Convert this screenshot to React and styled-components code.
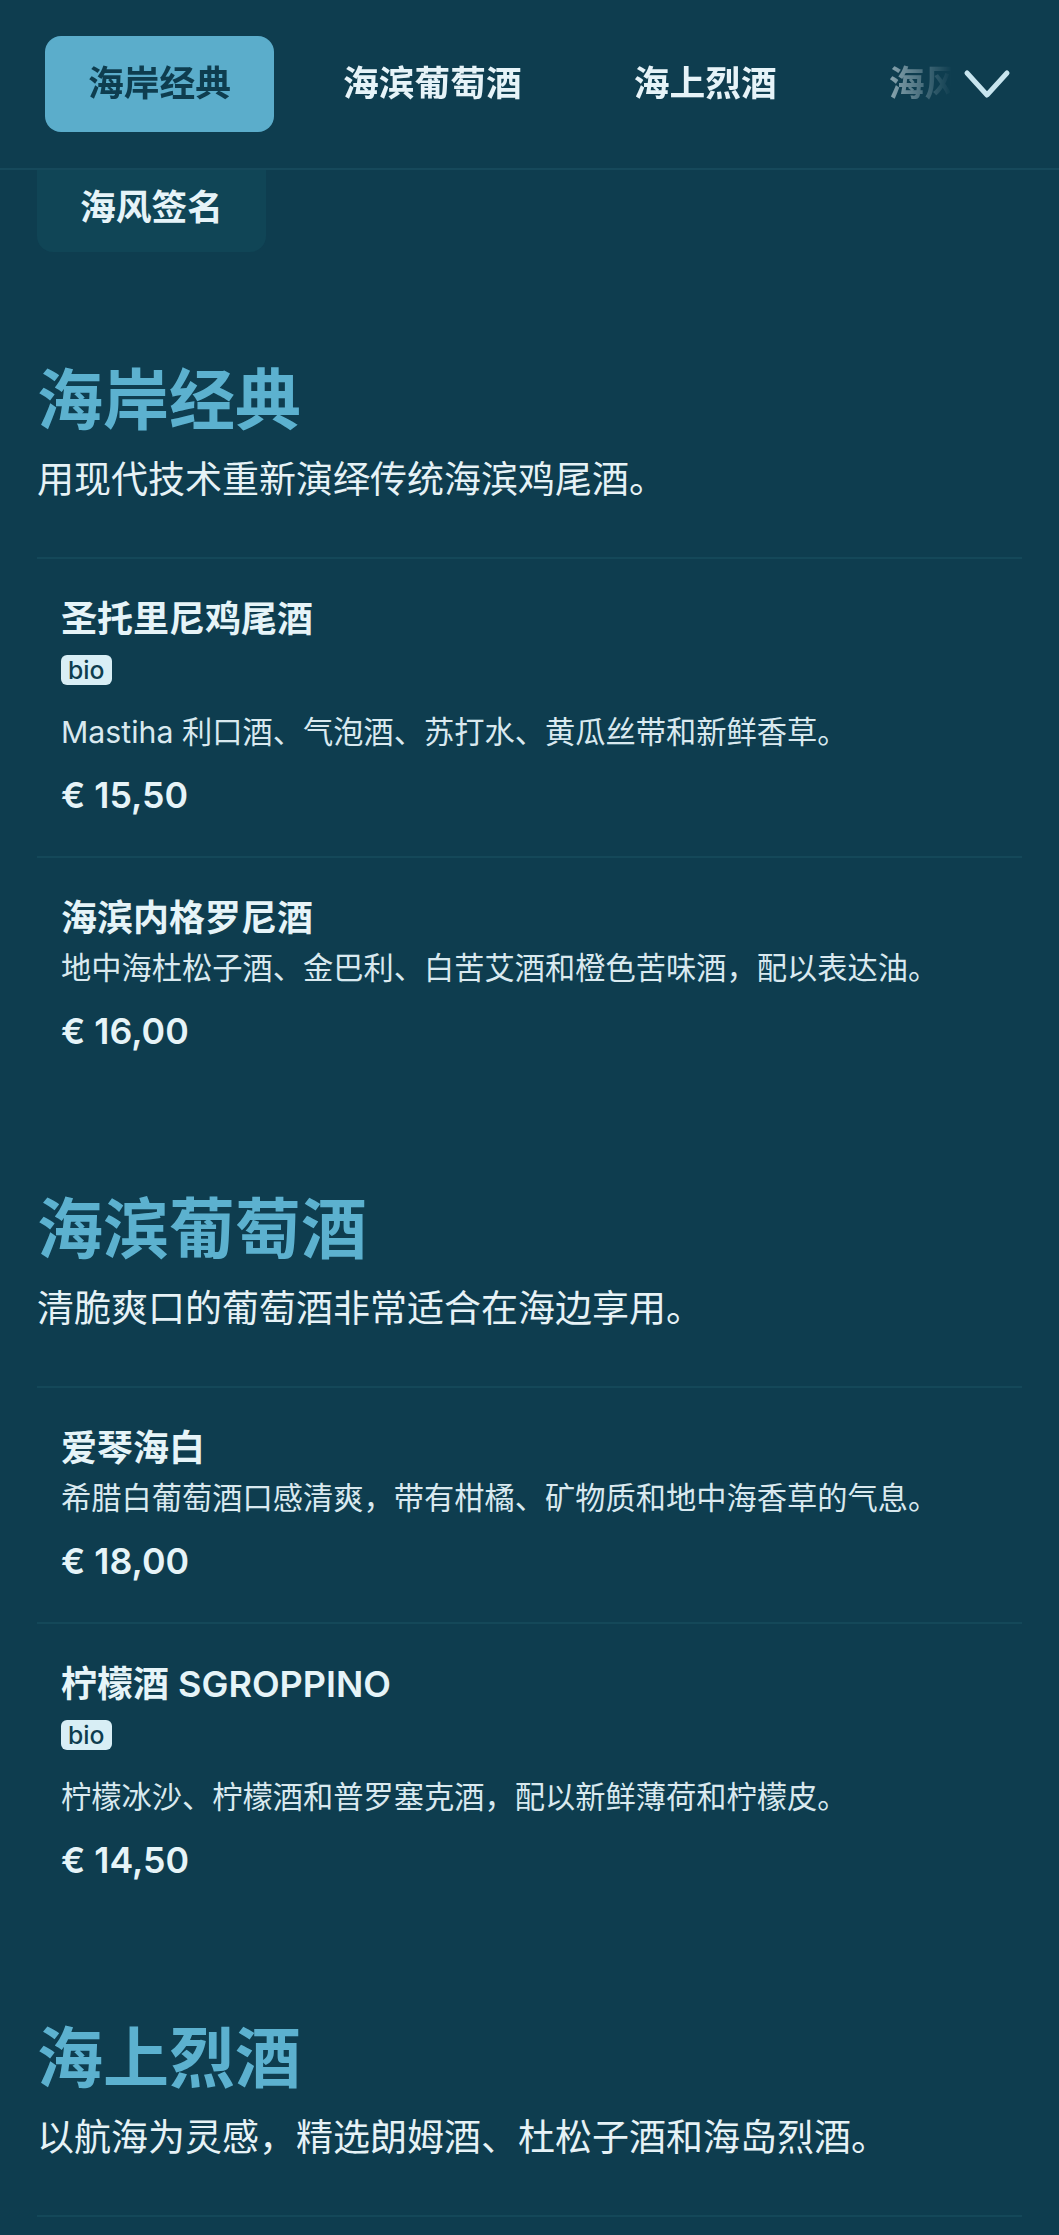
import React from "react";
import styled, { createGlobalStyle } from "styled-components";

const Global = createGlobalStyle`
  html, body {
    margin: 0;
    padding: 0;
    background: #0e3d4f;
  }
  body {
    font-family: Inter, "Noto Sans CJK SC", "Noto Sans", sans-serif;
    color: #e4f2f7;
    -webkit-font-smoothing: antialiased;
  }
  * { box-sizing: border-box; }
`;

const Page = styled.div`
  width: 100%;
  min-height: 2235px;
  background: #0e3d4f;
`;

const Header = styled.header`
  display: flex;
  align-items: center;
  padding: 36px 37px 36px 45px;
  border-bottom: 2px solid #16495b;
  background: #0e3d4f;
`;

const TabScroller = styled.div`
  flex: 1;
  min-width: 0;
  overflow: hidden;
  -webkit-mask-image: linear-gradient(to right, #000 calc(100% - 110px), transparent 100%);
  mask-image: linear-gradient(to right, #000 calc(100% - 110px), transparent 100%);
`;

const TabList = styled.div`
  display: flex;
  gap: 26px;
  width: max-content;
`;

const Tab = styled.button`
  height: 96px;
  padding: 0 43px;
  border: none;
  border-radius: 16px;
  font-family: inherit;
  font-size: 35.75px;
  font-weight: 600;
  line-height: 1;
  white-space: nowrap;
  cursor: pointer;
  background: ${(p) => (p.$active ? "#5badcb" : "transparent")};
  color: ${(p) => (p.$active ? "#0e3d4f" : "#e6f3f8")};
`;

const ChevronButton = styled.button`
  flex-shrink: 0;
  width: 70px;
  height: 96px;
  display: flex;
  align-items: center;
  justify-content: center;
  background: none;
  border: none;
  padding: 0;
  cursor: pointer;
`;

const SubRow = styled.div`
  display: flex;
  padding: 0 37px;
`;

const OverflowChip = styled.div`
  height: 82px;
  padding: 0 43px 14px;
  display: flex;
  align-items: center;
  background: #104556;
  border-radius: 0 0 16px 16px;
  font-size: 35.75px;
  font-weight: 600;
  color: #e6f3f8;
  white-space: nowrap;
`;

const Main = styled.main`
  display: flex;
  flex-direction: column;
  gap: 97px;
  padding: 108px 37px 120px;
`;

const Section = styled.section`
  display: flex;
  flex-direction: column;
`;

const SectionHead = styled.div`
  padding-bottom: 52px;
`;

const SectionTitle = styled.h2`
  margin: 0;
  font-size: 66px;
  line-height: 80px;
  font-weight: 700;
  color: #5cb1cf;
`;

const SectionSubtitle = styled.p`
  margin: 15px 0 0;
  font-size: 37px;
  line-height: 50px;
  font-weight: 400;
  color: #e6f2f6;
`;

const Item = styled.article`
  border-top: 2px solid #144859;
  padding: 36px 0 37px 24px;
`;

const ItemTitle = styled.h3`
  margin: 0;
  font-size: 36px;
  line-height: 48px;
  font-weight: 600;
  color: #e6f4f8;
`;

const Tags = styled.div`
  display: flex;
  gap: 10px;
  margin: 12px 0 25px;
`;

const Badge = styled.span`
  display: inline-flex;
  align-items: center;
  justify-content: center;
  height: 30px;
  padding: 0 7px;
  border-radius: 6px;
  background: #d8eef5;
  color: #0e3d4f;
  font-size: 24.75px;
  font-weight: 500;
  line-height: 1;
`;

const ItemDesc = styled.p`
  margin: 4px 0 0;
  font-size: 30.25px;
  line-height: 44px;
  font-weight: 400;
  color: #d9e9ef;
`;

const Price = styled.div`
  margin-top: 17px;
  font-size: 35.75px;
  line-height: 48px;
  font-weight: 600;
  color: #e6f4f8;
`;

const tabs = ["海岸经典", "海滨葡萄酒", "海上烈酒", "海风签名"];

const sections = [
  {
    title: "海岸经典",
    subtitle: "用现代技术重新演绎传统海滨鸡尾酒。",
    items: [
      {
        name: "圣托里尼鸡尾酒",
        tags: ["bio"],
        desc: "Mastiha 利口酒、气泡酒、苏打水、黄瓜丝带和新鲜香草。",
        price: "€ 15,50",
      },
      {
        name: "海滨内格罗尼酒",
        desc: "地中海杜松子酒、金巴利、白苦艾酒和橙色苦味酒，配以表达油。",
        price: "€ 16,00",
      },
    ],
  },
  {
    title: "海滨葡萄酒",
    subtitle: "清脆爽口的葡萄酒非常适合在海边享用。",
    items: [
      {
        name: "爱琴海白",
        desc: "希腊白葡萄酒口感清爽，带有柑橘、矿物质和地中海香草的气息。",
        price: "€ 18,00",
      },
      {
        name: "柠檬酒 SGROPPINO",
        tags: ["bio"],
        desc: "柠檬冰沙、柠檬酒和普罗塞克酒，配以新鲜薄荷和柠檬皮。",
        price: "€ 14,50",
      },
    ],
  },
  {
    title: "海上烈酒",
    subtitle: "以航海为灵感，精选朗姆酒、杜松子酒和海岛烈酒。",
    items: [
      {
        name: "水手朗姆酒",
        desc: "陈年加勒比朗姆酒，带有香草、焦糖和烤橡木的风味。",
        price: "€ 12,00",
      },
    ],
  },
];

function Chevron() {
  return (
    <svg width="48" height="30" viewBox="0 0 48 30" aria-hidden="true">
      <polyline
        points="4,4 24,26 44,4"
        fill="none"
        stroke="#c8e5ef"
        strokeWidth="5"
        strokeLinecap="round"
        strokeLinejoin="round"
      />
    </svg>
  );
}

export default function App() {
  return (
    <Page>
      <Global />
      <Header>
        <TabScroller>
          <TabList>
            {tabs.map((t, i) => (
              <Tab key={t} $active={i === 0}>
                {t}
              </Tab>
            ))}
          </TabList>
        </TabScroller>
        <ChevronButton aria-label="更多分类">
          <Chevron />
        </ChevronButton>
      </Header>
      <SubRow>
        <OverflowChip>海风签名</OverflowChip>
      </SubRow>
      <Main>
        {sections.map((s) => (
          <Section key={s.title}>
            <SectionHead>
              <SectionTitle>{s.title}</SectionTitle>
              <SectionSubtitle>{s.subtitle}</SectionSubtitle>
            </SectionHead>
            {s.items.map((it) => (
              <Item key={it.name}>
                <ItemTitle>{it.name}</ItemTitle>
                {it.tags && (
                  <Tags>
                    {it.tags.map((tg) => (
                      <Badge key={tg}>{tg}</Badge>
                    ))}
                  </Tags>
                )}
                <ItemDesc>{it.desc}</ItemDesc>
                <Price>{it.price}</Price>
              </Item>
            ))}
          </Section>
        ))}
      </Main>
    </Page>
  );
}
